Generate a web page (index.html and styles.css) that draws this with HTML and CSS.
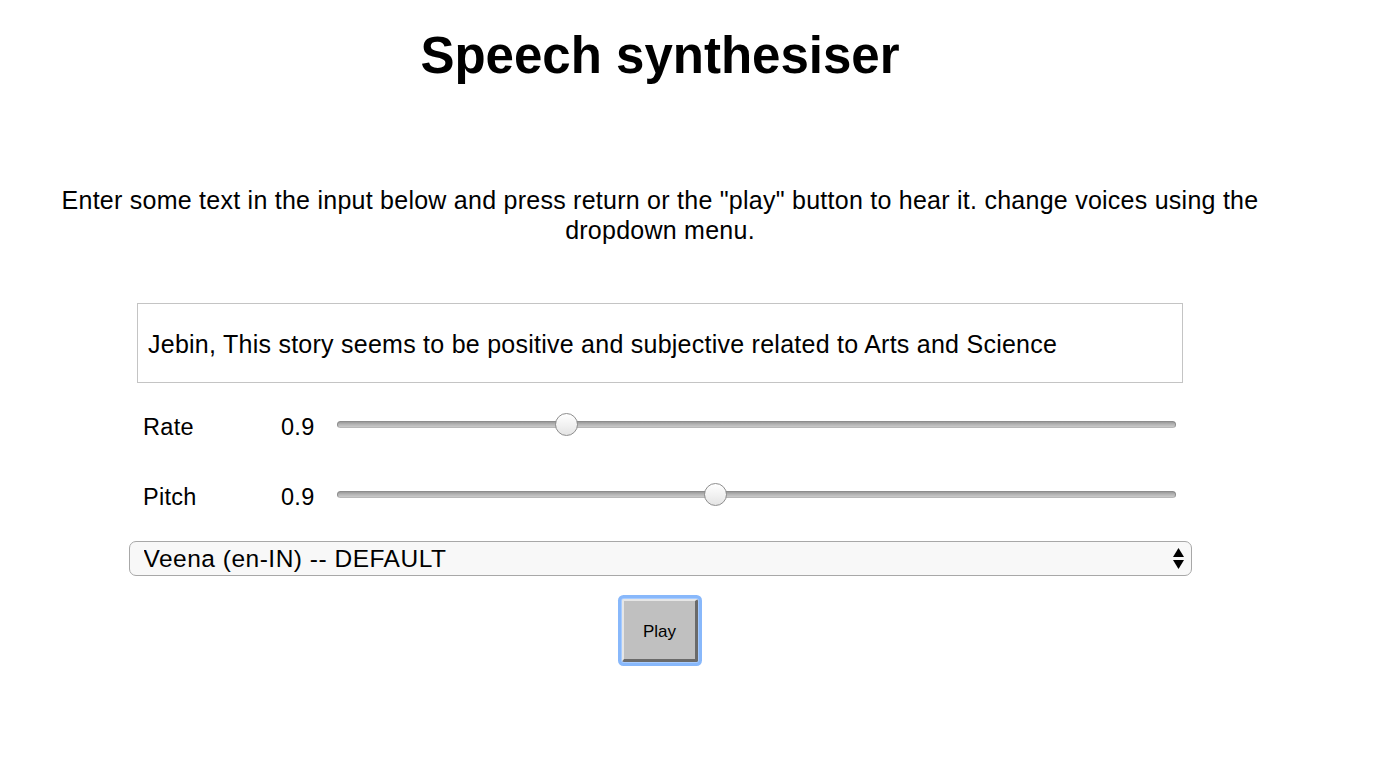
FILE: index.html
```html
<!DOCTYPE html>
<html lang="en">
<head>
<meta charset="utf-8">
<title>Speech synthesiser</title>
<link rel="stylesheet" href="styles.css">
</head>
<body>
<main class="page">
  <h1 class="title">Speech synthesiser</h1>
  <p class="intro">Enter some text in the input below and press return or the "play" button to hear it. change voices using the dropdown menu.</p>
  <form class="form">
    <input class="txt" type="text" value="Jebin, This story seems to be positive and subjective related to Arts and Science">
    <div class="row">
      <label class="label" for="rate">Rate</label>
      <span class="val">0.9</span>
      <input class="slider" type="range" id="rate" min="0.5" max="2" step="0.1" value="0.9">
    </div>
    <div class="row">
      <label class="label" for="pitch">Pitch</label>
      <span class="val">0.9</span>
      <input class="slider" type="range" id="pitch" min="0" max="2" step="0.1" value="0.9">
    </div>
    <div class="select-wrap">
      <select class="voice">
        <option>Veena (en-IN) -- DEFAULT</option>
      </select>
      <span class="arrows">
        <svg width="11" height="21" viewBox="0 0 11 21"><polygon points="5.5,0 11,9 0,9" fill="#000"/><polygon points="0,12 11,12 5.5,21" fill="#000"/></svg>
      </span>
    </div>
    <div class="controls">
      <button class="play" type="button" autofocus>Play</button>
    </div>
  </form>
</main>
</body>
</html>
```

FILE: styles.css
```css
html, body {
  margin: 0;
  padding: 0;
  background: #fff;
}

body {
  font-family: "Liberation Sans", Arial, Helvetica, sans-serif;
  color: #000;
}

.page {
  width: 1320px;
  padding-top: 27px;
}

.title {
  margin: 0;
  text-align: center;
  font-size: 51px;
  line-height: 57px;
  font-weight: bold;
}

.intro {
  margin: 101px 0 0;
  text-align: center;
  font-size: 25px;
  letter-spacing: 0.25px;
  line-height: 30px;
  padding: 0 40px;
}

.form {
  margin-top: 58px;
  display: flex;
  flex-direction: column;
  align-items: center;
}

.txt {
  box-sizing: border-box;
  width: 1046px;
  height: 80px;
  margin: 0;
  padding: 2px 10px 0;
  border: 1px solid #c4c4c4;
  font-family: "Liberation Sans", Arial, sans-serif;
  font-size: 25px;
  letter-spacing: 0.25px;
  color: #000;
  outline: none;
}

.row {
  box-sizing: border-box;
  width: 1046px;
  height: 50px;
  margin-top: 19px;
  padding: 0 6px;
  display: flex;
  align-items: center;
  font-size: 23.5px;
  letter-spacing: 0.3px;
}

.row + .row {
  margin-top: 20px;
}

.label {
  width: 138px;
  flex: none;
}

.val {
  width: 56px;
  flex: none;
}

.slider {
  -webkit-appearance: none;
  appearance: none;
  width: 839px;
  height: 24px;
  margin: 0 0 6px;
  padding: 0;
  background: transparent;
  flex: none;
}

.slider::-webkit-slider-runnable-track {
  height: 7px;
  border-radius: 4px;
  box-sizing: border-box;
  border: 1px solid #8c8c8c;
  border-bottom-color: #b8b8b8;
  background: linear-gradient(#9a9a9a, #b4b4b4 45%, #cacaca);
}

.slider::-webkit-slider-thumb {
  -webkit-appearance: none;
  appearance: none;
  box-sizing: border-box;
  width: 23px;
  height: 23px;
  margin-top: -9px;
  border-radius: 50%;
  border: 1px solid #8e8e8e;
  background: linear-gradient(#ffffff, #f2f2f2 50%, #e4e4e4);
}

.select-wrap {
  position: relative;
  width: 1063px;
  margin-top: 19px;
}

.voice {
  -webkit-appearance: none;
  appearance: none;
  box-sizing: border-box;
  display: block;
  width: 1063px;
  height: 35px;
  margin: 0;
  padding: 0 14px;
  border: 1px solid #a8a8a8;
  border-radius: 7px;
  background: #f8f8f8;
  font-family: "Liberation Sans", Arial, sans-serif;
  font-size: 24.5px;
  letter-spacing: 0.5px;
  color: #000;
  outline: none;
}

.arrows {
  position: absolute;
  right: 8px;
  top: 7px;
  line-height: 0;
  pointer-events: none;
}

.controls {
  margin-top: 23px;
  padding-bottom: 10px;
  display: flex;
  justify-content: center;
}

.play {
  box-sizing: border-box;
  width: 76px;
  height: 63px;
  margin: 0;
  padding: 4px 0 0;
  background: #c0c0c0;
  border-style: solid;
  border-width: 2px 3px 3px 2px;
  border-color: #e6e6e6 #6a6a6a #6a6a6a #e6e6e6;
  font-family: "Liberation Sans", Arial, sans-serif;
  font-size: 17px;
  color: #000;
  outline: none;
  box-shadow: 0 0 0 1px #a8ccff, 0 0 0 4px #88b8fb;
  border-radius: 2px;
}
```
